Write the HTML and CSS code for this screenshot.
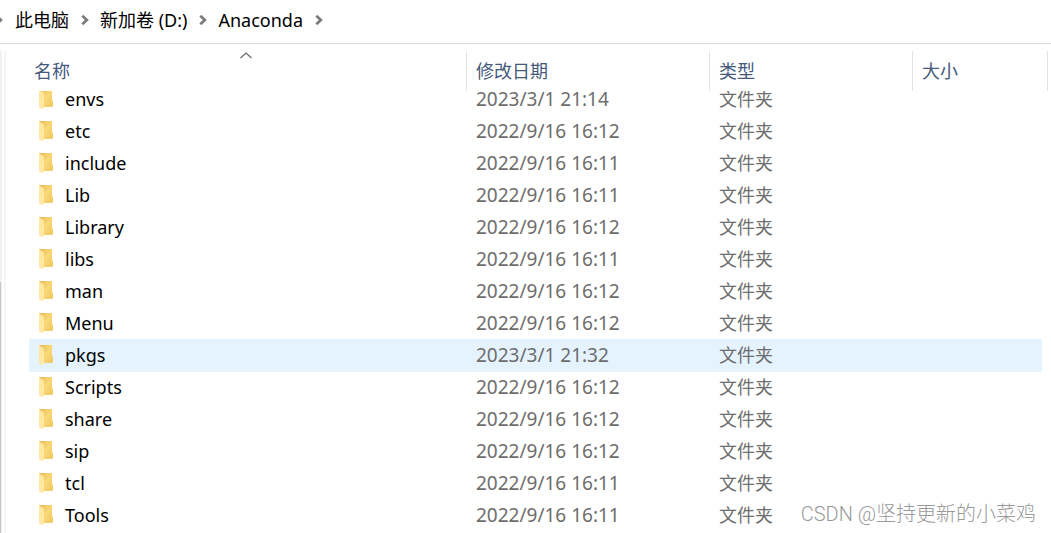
FILE: index.html
```html
<!DOCTYPE html>
<html lang="zh-CN">
<head>
<meta charset="utf-8">
<title>Anaconda</title>
<link rel="stylesheet" href="styles.css">
</head>
<body>
<svg class="defs" aria-hidden="true">
  <defs>
    <linearGradient id="back" x1="0" y1="0" x2="1" y2="1">
      <stop offset="0" stop-color="#e3b94f"/><stop offset="0.5" stop-color="#fad978"/><stop offset="1" stop-color="#efc75d"/>
    </linearGradient>
    <linearGradient id="front" x1="0" y1="0" x2="1" y2="1">
      <stop offset="0" stop-color="#ffe59a"/><stop offset="1" stop-color="#ffeaa9"/>
    </linearGradient>
  </defs>
  <symbol id="folder" viewBox="0 0 14 21">
    <path d="M0 0H13V11L14 12V17L13 18H4L0 17Z" fill="url(#back)"/>
    <path d="M0 0L4 3L5 5V18L4 19V21L0 18Z" fill="url(#front)"/>
  </symbol>
  <symbol id="chevron" viewBox="0 0 8 10">
    <path d="M1.3 .8L5.8 5L1.3 9.2" fill="none" stroke="#7c7c7c" stroke-width="2.8"/>
  </symbol>
</svg>
<nav class="address" aria-label="路径">
  <svg class="chevron chevron-first"><use href="#chevron"/></svg>
  <a class="crumb" href="#">此电脑</a>
  <svg class="chevron"><use href="#chevron"/></svg>
  <a class="crumb" href="#">新加卷 (D:)</a>
  <svg class="chevron"><use href="#chevron"/></svg>
  <a class="crumb" href="#">Anaconda</a>
  <svg class="chevron"><use href="#chevron"/></svg>
</nav>
<main class="explorer">
  <div class="gutter"><div class="thumb"></div></div>
  <table class="files">
    <thead>
      <tr class="row head">
        <th class="sorted" aria-sort="ascending">名称<svg class="sort" viewBox="0 0 12 7"><path d="M.5 6L6 1L11.5 6" fill="none" stroke="#666" stroke-width="1.2"/></svg></th>
        <th>修改日期</th><th>类型</th><th>大小</th>
      </tr>
    </thead>
    <tbody>
      <tr class="row"><td class="name"><svg class="icon"><use href="#folder"/></svg>envs</td><td>2023/3/1 21:14</td><td>文件夹</td><td></td></tr>
      <tr class="row"><td class="name"><svg class="icon"><use href="#folder"/></svg>etc</td><td>2022/9/16 16:12</td><td>文件夹</td><td></td></tr>
      <tr class="row"><td class="name"><svg class="icon"><use href="#folder"/></svg>include</td><td>2022/9/16 16:11</td><td>文件夹</td><td></td></tr>
      <tr class="row"><td class="name"><svg class="icon"><use href="#folder"/></svg>Lib</td><td>2022/9/16 16:11</td><td>文件夹</td><td></td></tr>
      <tr class="row"><td class="name"><svg class="icon"><use href="#folder"/></svg>Library</td><td>2022/9/16 16:12</td><td>文件夹</td><td></td></tr>
      <tr class="row"><td class="name"><svg class="icon"><use href="#folder"/></svg>libs</td><td>2022/9/16 16:11</td><td>文件夹</td><td></td></tr>
      <tr class="row"><td class="name"><svg class="icon"><use href="#folder"/></svg>man</td><td>2022/9/16 16:12</td><td>文件夹</td><td></td></tr>
      <tr class="row"><td class="name"><svg class="icon"><use href="#folder"/></svg>Menu</td><td>2022/9/16 16:12</td><td>文件夹</td><td></td></tr>
      <tr class="row selected"><td class="name"><svg class="icon"><use href="#folder"/></svg>pkgs</td><td>2023/3/1 21:32</td><td>文件夹</td><td></td></tr>
      <tr class="row"><td class="name"><svg class="icon"><use href="#folder"/></svg>Scripts</td><td>2022/9/16 16:12</td><td>文件夹</td><td></td></tr>
      <tr class="row"><td class="name"><svg class="icon"><use href="#folder"/></svg>share</td><td>2022/9/16 16:12</td><td>文件夹</td><td></td></tr>
      <tr class="row"><td class="name"><svg class="icon"><use href="#folder"/></svg>sip</td><td>2022/9/16 16:12</td><td>文件夹</td><td></td></tr>
      <tr class="row"><td class="name"><svg class="icon"><use href="#folder"/></svg>tcl</td><td>2022/9/16 16:11</td><td>文件夹</td><td></td></tr>
      <tr class="row"><td class="name"><svg class="icon"><use href="#folder"/></svg>Tools</td><td>2022/9/16 16:11</td><td>文件夹</td><td></td></tr>
    </tbody>
  </table>
</main>
<div class="watermark">CSDN @坚持更新的小菜鸡</div>
</body>
</html>
```
FILE: styles.css
```css
* { box-sizing: border-box; }

body {
  margin: 0;
  height: 100vh;
  overflow: hidden;
  display: flex;
  flex-direction: column;
  background: #fff;
  color: #000;
  font: 18px/24px "Noto Sans", "Noto Sans CJK SC", sans-serif;
}

.defs { position: absolute; width: 0; height: 0; }

.address {
  display: flex;
  align-items: center;
  flex: none;
  height: 44px;
  padding-bottom: 3px;
  border-bottom: 1px solid #d9d9d9;
}
.crumb { color: #000; text-decoration: none; white-space: nowrap; }
.chevron { flex: none; width: 8px; height: 10px; margin: 0 11px 0 12px; }
.chevron-first { margin: 0 12px 0 -5px; }

.explorer { flex: 1; min-height: 0; display: flex; padding-right: 3px; }

.gutter {
  flex: none;
  width: 6px;
  margin: 7px 23px 0 0;
  display: flex;
  flex-direction: column;
  justify-content: flex-end;
  border-right: 2px solid #f5f5f5;
  background: linear-gradient(to right, #f0f0f0 2px, #fff 2px);
}
.thumb { width: 1px; height: 52%; background: #c4c4c4; }

.files { display: block; flex: 1; min-width: 0; }
.files thead, .files tbody { display: block; }
.files thead { position: relative; z-index: 1; padding-top: 7px; background: #fff; }
/* The list is scrolled slightly under its header. */
.files tbody { margin-top: -8px; }

.row {
  display: grid;
  grid-template-columns: 438px 243px 203px 1fr;
  height: 32px;
  margin-right: 6px;
  align-items: center;
}
.row th, .row td { padding: 0 0 0 9px; text-align: left; font-weight: 400; white-space: nowrap; }
.row td { color: #6d6d6d; font-size: 18px; }
.row td:nth-child(2) { font-size: 19px; }

.head { height: 40px; margin-right: 0; align-items: stretch; }
.head th { border-right: 1px solid #e2e2e2; padding: 8px 0 0 9px; color: #44597b; }
.head th.sorted { position: relative; padding-left: 5px; }
.sort { position: absolute; top: 1px; left: 211px; width: 12px; height: 7px; }

.row td.name { display: flex; align-items: center; gap: 12px; padding-left: 10px; color: #000; }
.icon { flex: none; width: 14px; height: 21px; }
.selected { background: #e5f3ff; box-shadow: 0 1px #e5f3ff; }

.watermark {
  position: absolute;
  right: 15px;
  bottom: 7px;
  color: #999;
  font: 300 20px/24px Roboto, "Noto Sans CJK SC", sans-serif;
}
```
